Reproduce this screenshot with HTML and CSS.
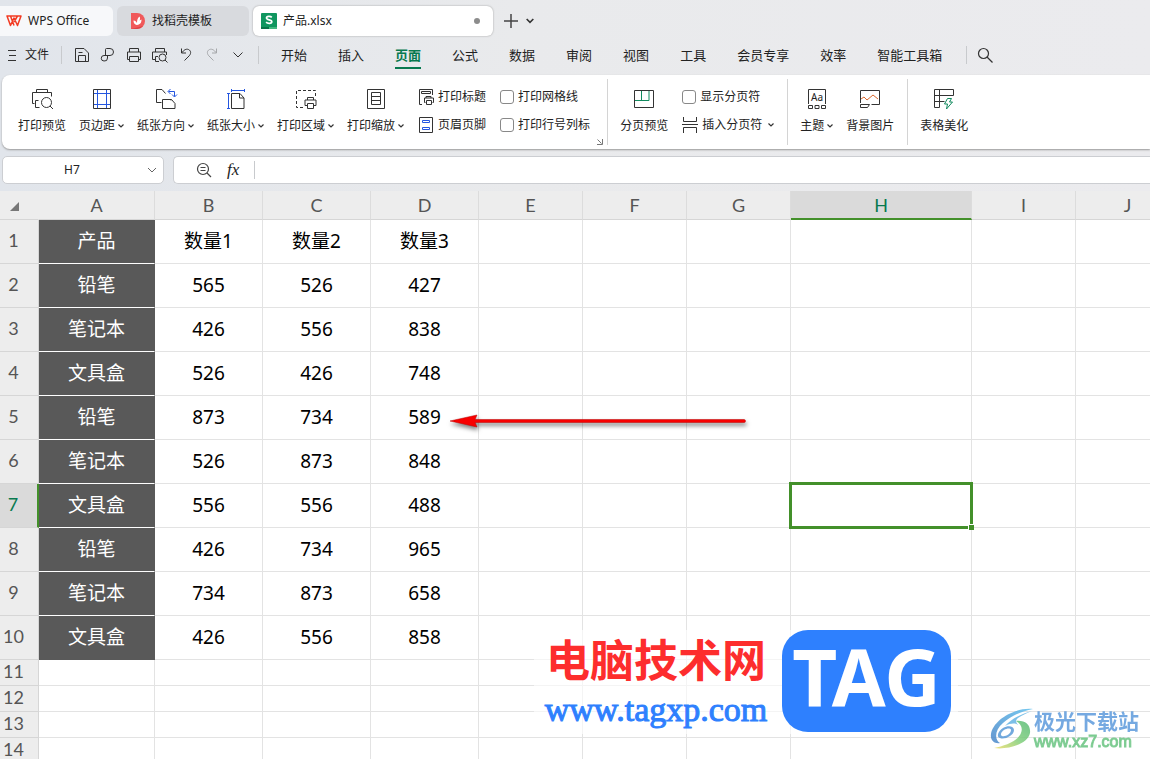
FILE: index.html
```html
<!DOCTYPE html>
<html lang="zh-CN">
<head>
<meta charset="utf-8">
<title>产品.xlsx - WPS Office</title>
<link rel="stylesheet" href="styles.css">
</head>
<body>
<svg class="defs" aria-hidden="true">
  <symbol id="chev" viewBox="0 0 6 6"><path d="M.5 1.500 3 4l2.500-2.500" fill="none" stroke="#333" stroke-width="1.200"/></symbol>
  <symbol id="thin" viewBox="0 0 10 10"><path d="m1 3 4 4 4-4" fill="none" stroke="#666"/></symbol>
</svg>
<div class="app">
  <header class="tabs">
    <button class="tab home">
      <svg width="16" height="12" viewBox="0 0 16 12"><path d="M1 1h14l-3.500 9.500L8 3 4.500 10.500zM4.500 1 8 10.500 M11.500 1 8 7" fill="none" stroke="#f23a22" stroke-width="1.500" stroke-linejoin="round"/></svg>
      <span>WPS Office</span>
    </button>
    <button class="tab templates">
      <svg width="16" height="16" viewBox="0 0 16 16"><path d="M1 0h6a8 8 0 0 1 0 16H1z" fill="#f0595a"/><path d="M1 16 13 13a8 8 0 0 1-6 3z" fill="#dd4146"/><path d="M7 12C4 11.500 3.500 9 3.500 7.500c2 0 2.500 1 3.500 2.500 0-3 .5-5 2.500-6.500 1 2 .5 3 0 4l2-1c0 3-1 5-4.500 5.500z" fill="#fff"/></svg>
      <span>找稻壳模板</span>
    </button>
    <button class="tab file">
      <svg width="16" height="16" viewBox="0 0 16 16"><rect width="16" height="16" rx="1" fill="#10965f"/><path d="M0 14h8v2H0z" fill="#087447"/><path d="M8 14h8v2H8z" fill="#43b77f"/><path d="M10.800 4.300C9.500 3 5.500 3 5.500 5c0 2.400 5.300 1.300 5.300 3.700 0 2.100-4.200 2.100-5.700.5" fill="none" stroke="#fff" stroke-width="1.700"/></svg>
      <span>产品.xlsx</span><i class="dot"></i>
    </button>
    <button class="plain" aria-label="新建"><svg width="14" height="14" viewBox="0 0 14 14"><path d="M7 0v14M0 7h14" stroke="#444" stroke-width="1.500"/></svg></button>
    <button class="plain" aria-label="更多标签"><svg width="8" height="8"><use href="#chev"/></svg></button>
  </header>

  <nav class="menu">
    <button class="filebtn"><svg width="10" height="12" viewBox="0 0 10 12"><path d="M0 1.500h8M1 6.500h7M0 11.500h8" stroke="#333"/></svg><span>文件</span></button>
    <i class="vline"></i>
    <div class="quick">
      <button aria-label="保存"><svg width="16" height="16" viewBox="0 0 16 16"><path d="M1.500 1.500h8.500L14.500 6v8.500h-13zM4.500 14.500v-6h7v6M4.500 5.500h4"/></svg></button>
      <button aria-label="输出"><svg width="16" height="16" viewBox="0 0 16 16"><path d="M5.500 8.500v-6q0-1 1-1H10a3.500 3.500 0 0 1 0 7H4a2.500 2.500 0 0 0 0 5.500q3.500.5 3.500-3v-2.500"/></svg></button>
      <button aria-label="打印"><svg width="16" height="16" viewBox="0 0 16 16"><path d="M3.500 5V1.500h9V5M3.500 12.500h-2v-7.500h13v7.500h-2M3.500 9.500h9v5h-9z"/></svg></button>
      <button aria-label="打印预览"><svg width="16" height="16" viewBox="0 0 16 16"><path d="M3.500 5V1.500h9V5M3.500 12.500h-3v-7.500h14v3M7 14.500H3.500v-5H6"/><circle cx="10.500" cy="10.500" r="3.500"/><path d="m13 13 2.500 2.500"/></svg></button>
      <button aria-label="撤销"><svg width="16" height="16" viewBox="0 0 16 16"><path d="M3.500 1.500v4.500H8M3.500 6C6 3 8 1.500 10.500 2.500c3 1.500 2.500 4.500.5 6.500L6.500 13.500"/></svg></button>
      <button aria-label="恢复" class="off"><svg width="16" height="16" viewBox="0 0 16 16"><path d="M12.500 1.500v4.500H8M12.500 6C10 3 8 1.500 5.500 2.500c-3 1.500-2.500 4.500-.5 6.500l4.500 4.500"/></svg></button>
      <button aria-label="更多"><svg width="16" height="16" viewBox="0 0 16 16"><path d="m3.500 5.500 4.500 4.500 4.500-4.500"/></svg></button>
    </div>
    <i class="vline"></i>
    <div class="menus">
      <button>开始</button><button>插入</button><button class="on">页面</button><button>公式</button><button>数据</button><button>审阅</button><button>视图</button><button>工具</button><button>会员专享</button><button>效率</button><button>智能工具箱</button>
    </div>
    <i class="vline"></i>
    <button class="find" aria-label="搜索"><svg width="16" height="16" viewBox="0 0 16 16" fill="none" stroke="#333" stroke-width="1.200"><circle cx="6.500" cy="6.500" r="5"/><path d="m10 10 5.500 5.500"/></svg></button>
  </nav>

  <section class="ribbon">
    <div class="group page">
      <button class="big"><svg width="24" height="24" viewBox="0 0 24 24"><path d="M6.500 5.500v-3h11v3M4.500 16.500h-2v-11h19v4M9.500 20.500h-4v-7h3"/><circle cx="16.500" cy="15.500" r="5"/><path d="m20 19 3 3"/></svg><span>打印预览</span></button>
      <button class="big"><svg width="24" height="24" viewBox="0 0 24 24"><path d="M7.500 2v19M16.500 2v19M3 6.500h18M3 17.500h18" class="blue"/><path d="M3.500 2.500h17v19h-17z"/></svg><span>页边距<svg width="6" height="6"><use href="#chev"/></svg></span></button>
      <button class="big"><svg width="24" height="24" viewBox="0 0 24 24"><path d="M7.500 15.500h-5v-13h5.500l3.500 4M8.500 21.500v-9h9l3.500 4v5zM17 12.500v1"/><path d="M14.500 4.500h6v5M16.500 2l-2.500 2.500L16.500 7M18 7.500l2.500 2.500L23 7.500" class="blue"/></svg><span>纸张方向<svg width="6" height="6"><use href="#chev"/></svg></span></button>
      <button class="big"><svg width="24" height="24" viewBox="0 0 24 24"><path d="M7.500 6.500h8.500l4 4.500v10.500H7.500zM15.500 6.500v4.500H20"/><path d="M8 3.500h12M7.500 2v3M20.500 2v3M4.500 7v14M3 6.500h3M3 21.500h3" class="blue"/></svg><span>纸张大小<svg width="6" height="6"><use href="#chev"/></svg></span></button>
      <button class="big"><svg width="24" height="24" viewBox="0 0 24 24"><path d="M9 20.500H2.500v-17h19V9" stroke-dasharray="3 2"/><path d="M13.500 13v-2.500h6V13M13 18.500h-2V13h11v5.500h-2M13.500 16.500h6v5h-6z"/></svg><span>打印区域<svg width="6" height="6"><use href="#chev"/></svg></span></button>
      <button class="big"><svg width="24" height="24" viewBox="0 0 24 24"><path d="M3.500 2.500h17v19h-17zM7.500 5.500h9v12h-9zM7.500 9.500h9M7.500 13.500h9"/></svg><span>打印缩放<svg width="6" height="6"><use href="#chev"/></svg></span></button>
      <div class="stack">
        <button class="small"><svg width="16" height="16" viewBox="0 0 16 16"><path d="M4 15.500H1.500v-15h13V6M3.500 2.500h9v2h-9zM8 9V7.500h5V9M7.500 13.500h-1V9h9v4.500h-1M8.500 11.500h5v4h-5z"/></svg><span>打印标题</span></button>
        <button class="small"><svg width="16" height="16" viewBox="0 0 16 16"><path d="M1.500.5h13v15h-13z"/><path d="M4.500 3.500h7v2h-7zM4.500 10.500h7v2h-7z" class="blue"/></svg><span>页眉页脚</span></button>
      </div>
      <div class="stack">
        <label class="small"><input type="checkbox"><span>打印网格线</span></label>
        <label class="small"><input type="checkbox"><span>打印行号列标</span></label>
      </div>
      <button class="corner" aria-label="页面设置"><svg width="6" height="6" viewBox="0 0 6 6"><path d="M.5.500l4 4M5.500 0v5.500H0" stroke="#777" fill="none"/></svg></button>
    </div>
    <div class="group">
      <button class="big"><svg width="24" height="24" viewBox="0 0 24 24"><path d="M2.500 3.500h19v17h-19z"/><path d="M3 13.500h14V4M9.500 4v9" class="green"/></svg><span>分页预览</span></button>
      <div class="stack">
        <label class="small"><input type="checkbox"><span>显示分页符</span></label>
        <button class="small"><svg width="16" height="16" viewBox="0 0 16 16"><path d="M1.500 0v4.500h13V0M0 7.500h16M1.500 16v-5.500h13V16"/></svg><span>插入分页符</span><svg class="drop" width="6" height="6"><use href="#chev"/></svg></button>
      </div>
    </div>
    <div class="group">
      <button class="big"><svg width="24" height="24" viewBox="0 0 24 24"><path d="M3.500 17V2.500h17V17M3.500 18.500h4v3h-4zM10 18.500h4v3h-4zM16.500 18.500h4v3h-4z"/><text x="12" y="14" text-anchor="middle" class="aa">Aa</text></svg><span>主题<svg width="6" height="6"><use href="#chev"/></svg></span></button>
      <button class="big"><svg width="24" height="24" viewBox="0 0 24 24"><path d="M2.500 16V3.500h19v14h-8M2.500 17.500h9l-2 3h-7z"/><path d="m3 12 3-2 3 3 6-5 5 4" class="orange"/></svg><span>背景图片</span></button>
    </div>
    <div class="group">
      <button class="big"><svg width="24" height="24" viewBox="0 0 24 24"><path d="M13 8.500h8.500v-6h-19v18h5V2.500M2.500 8.500H13M2.500 14.500h10"/><path d="m15.500 11.500-3 5.500h3l-1 5 6-7h-3l2-3.500z" class="green"/></svg><span>表格美化</span></button>
    </div>
  </section>

  <section class="formula">
    <div class="namebox"><input aria-label="名称框" value="H7"><button aria-label="展开"><svg width="10" height="10"><use href="#thin"/></svg></button></div>
    <div class="fxbox">
      <button aria-label="缩小"><svg width="16" height="16" viewBox="0 0 16 16" fill="none" stroke="#444" stroke-width="1.200"><circle cx="7" cy="7" r="5.500"/><path d="m11 11 4 4M4.500 5.500h5M4.500 8.500h5"/></svg></button>
      <button class="fx" aria-label="插入函数">fx</button>
      <i class="vline"></i>
      <input aria-label="编辑栏">
    </div>
  </section>

  <main class="sheet">
    <table>
      <colgroup><col class="c0"><col class="ca"><col class="cb"><col class="cb"><col class="cb"><col class="ce"><col class="ce"><col class="ce"><col class="ch"><col class="ce"><col class="ce"></colgroup>
      <thead><tr><th class="all"><svg width="9" height="9" viewBox="0 0 9 9"><path d="M9 0v9H0z" fill="#777"/></svg></th><th>A</th><th>B</th><th>C</th><th>D</th><th>E</th><th>F</th><th>G</th><th class="sel">H</th><th>I</th><th>J</th></tr></thead>
      <tbody>
        <tr><th>1</th><td>产品</td><td>数量1</td><td>数量2</td><td>数量3</td><td></td><td></td><td></td><td></td><td></td><td></td></tr>
        <tr><th>2</th><td>铅笔</td><td>565</td><td>526</td><td>427</td><td></td><td></td><td></td><td></td><td></td><td></td></tr>
        <tr><th>3</th><td>笔记本</td><td>426</td><td>556</td><td>838</td><td></td><td></td><td></td><td></td><td></td><td></td></tr>
        <tr><th>4</th><td>文具盒</td><td>526</td><td>426</td><td>748</td><td></td><td></td><td></td><td></td><td></td><td></td></tr>
        <tr><th>5</th><td>铅笔</td><td>873</td><td>734</td><td>589</td><td></td><td></td><td></td><td></td><td></td><td></td></tr>
        <tr><th>6</th><td>笔记本</td><td>526</td><td>873</td><td>848</td><td></td><td></td><td></td><td></td><td></td><td></td></tr>
        <tr><th class="sel">7</th><td>文具盒</td><td>556</td><td>556</td><td>488</td><td></td><td></td><td></td><td class="active"><i class="handle"></i></td><td></td><td></td></tr>
        <tr><th>8</th><td>铅笔</td><td>426</td><td>734</td><td>965</td><td></td><td></td><td></td><td></td><td></td><td></td></tr>
        <tr><th>9</th><td>笔记本</td><td>734</td><td>873</td><td>658</td><td></td><td></td><td></td><td></td><td></td><td></td></tr>
        <tr><th>10</th><td>文具盒</td><td>426</td><td>556</td><td>858</td><td></td><td></td><td></td><td></td><td></td><td></td></tr>
      </tbody>
      <tbody class="short">
        <tr><th>11</th><td></td><td></td><td></td><td></td><td></td><td></td><td></td><td></td><td></td><td></td></tr>
        <tr><th>12</th><td></td><td></td><td></td><td></td><td></td><td></td><td></td><td></td><td></td><td></td></tr>
        <tr><th>13</th><td></td><td></td><td></td><td></td><td></td><td></td><td></td><td></td><td></td><td></td></tr>
        <tr><th>14</th><td></td><td></td><td></td><td></td><td></td><td></td><td></td><td></td><td></td><td></td></tr>
      </tbody>
    </table>
    <svg class="arrow" width="306" height="30" viewBox="0 0 306 30"><path d="M0 11 27 5l-2 4.500h269a1.500 1.500 0 0 1 0 3H25l2 4.500z" fill="#f80000" stroke="#b00" stroke-width=".5"/></svg>
    <div class="tagmark">
      <div class="tagtext"><span class="red">电脑技术网</span><span class="url">www.tagxp.com</span></div>
      <div class="tagbox">TAG</div>
    </div>
    <div class="xzmark">
      <svg width="44" height="42" viewBox="0 0 44 42">
        <defs>
          <linearGradient id="ga" x1="0" y1="1" x2="1" y2="0"><stop offset="0" stop-color="#4b86c8"/><stop offset="1" stop-color="#5fc0ee"/></linearGradient>
          <linearGradient id="gb" x1="0" y1="1" x2="1" y2="0"><stop offset="0" stop-color="#f3df6a"/><stop offset=".5" stop-color="#7fce7c"/><stop offset="1" stop-color="#58bb77"/></linearGradient>
        </defs>
        <path d="M43 1C25-1 3 12 1 26c-1 7 4 10 9 9C4 31 5 22 13 15 21 8 32 3 43 1z" fill="url(#ga)"/>
        <path d="M42 3C31 6 21 11 15 18c6-3 10-3 13-1-3-4-2-5 0-7 4-3 9-5 14-7z" fill="#65b5e4"/>
        <path d="M26 13c9-1 15 4 14 12C38 36 18 42 4 40c11-2 24-7 27-15 2-5 0-9-5-12z" fill="url(#gb)"/>
        <path d="M13 20c5-3 11-2 11 2 0 6-10 10-14 8-4-1-2-7 3-10zm1 2c-3 2-4 5-2 6 3 1 9-2 9-6 0-2-4-2-7 0z" fill="#5a9bd8"/>
      </svg>
      <div class="xztext"><span class="xzname">极光下载站</span><span class="xzurl">www.xz7.com</span></div>
    </div>
  </main>
</div>
</body>
</html>
```
FILE: styles.css
```css
* { box-sizing: border-box; }
body {
  margin: 0;
  font: 12px/18px "Noto Sans", "Noto Sans CJK SC", sans-serif;
  color: #222;
  background: #ededed;
}
button, input { font: inherit; color: inherit; }
button { border: 0; background: none; padding: 0; white-space: nowrap; }
svg { flex: none; }
.defs { position: absolute; width: 0; height: 0; }
.app {
  height: 100vh;
  display: flex;
  flex-direction: column;
  overflow: hidden;
  background: linear-gradient(90deg, #e1e5eb, #e9eaec 45%, #ebebee);
}
.vline { width: 1px; height: 18px; background: #c8cacd; flex: none; }

.tabs { display: flex; align-items: center; gap: 4px; padding-top: 6px; }
.tab { display: flex; align-items: center; gap: 6px; height: 30px; border-radius: 6px; text-align: left; }
.tab.home { width: 113px; padding-left: 6px; background: #f7f8fa; border-radius: 0 6px 6px 0; }
.tab.templates { width: 132px; padding-left: 13px; background: #d8dade; }
.tab.file { width: 240px; padding: 0 13px 0 8px; background: #fff; box-shadow: 0 0 2px #999; }
.dot { width: 6px; height: 6px; border-radius: 50%; background: #8c8c8c; margin-left: auto; }
.plain { display: flex; padding: 0 4px 0 7px; }
.plain + .plain { padding: 0; }

.menu { display: flex; align-items: center; height: 38px; margin-bottom: 1px; }
.filebtn { display: flex; align-items: center; gap: 7px; padding: 0 12px 0 8px; }
.quick { display: flex; padding: 0 7px; }
.quick button { width: 26px; display: flex; justify-content: center; }
.quick svg { fill: none; stroke: #333; }
.quick .off { opacity: .35; }
.menus { display: flex; gap: 31px; padding: 0 24px 0 22px; font-size: 13px; }
.menus button { line-height: 24px; border-bottom: 2px solid transparent; margin-top: 2px; }
.menus .on { color: #08794f; font-weight: 700; border-color: #08794f; }
.find { display: flex; padding-left: 10px; }

.ribbon {
  display: flex;
  align-items: center;
  height: 74px;
  margin-left: 2px;
  background: #fff;
  border-radius: 8px 0 0 8px;
  box-shadow: 0 1px 2px #999;
}
.group { position: relative; display: flex; align-items: center; gap: 13px; height: 66px; padding: 0 13px 0 12px; border-right: 1px solid #d4d4d4; }
.group.page { padding: 0 17px 0 16px; }
.group:last-child { border: 0; }
.big { display: flex; flex-direction: column; align-items: center; gap: 6px; padding-bottom: 3px; }
.big > span { display: flex; align-items: center; gap: 3px; }
.ribbon button > svg { fill: none; stroke: #333; }
.ribbon .blue { stroke: #2456e0; }
.ribbon .green { stroke: #118a5e; }
.ribbon .orange { stroke: #d9662b; }
.aa { font-size: 10px; fill: #222; stroke: none; }
.stack { display: flex; flex-direction: column; gap: 10px; margin-left: 1px; padding-bottom: 2px; }
.small { display: flex; align-items: center; gap: 4px; }
.small input { appearance: none; width: 14px; height: 14px; margin: 0; border: 1px solid #888; border-radius: 3px; background: #fff; }
.small .drop { margin-left: 2px; }
.corner { position: absolute; right: 4px; bottom: 0; display: flex; }

.formula { display: flex; gap: 9px; padding: 7px 0 7px 2px; }
.namebox, .fxbox { display: flex; align-items: center; height: 28px; background: #fff; border: 1px solid #ccced2; border-radius: 5px; }
.namebox { width: 162px; }
.namebox input { flex: 1; min-width: 0; border: 0; background: none; text-align: center; outline: 0; }
.namebox button { width: 22px; display: flex; justify-content: center; }
.fxbox { flex: 1; border-right: 0; border-radius: 5px 0 0 5px; padding-left: 22px; gap: 15px; }
.fxbox button { display: flex; }
.fxbox .fx { font: italic 17px/20px "Liberation Serif", serif; }
.fxbox input { flex: 1; border: 0; background: none; outline: 0; }

.sheet { position: relative; flex: 1; overflow: hidden; background: #ededed; }
table { table-layout: fixed; width: 1180px; border-spacing: 0; }
.c0 { width: 39px; }
.ca { width: 116px; }
.cb { width: 108px; }
.ce { width: 104px; }
.ch { width: 181px; }
th, td { padding: 0 0 2px; height: 44px; border: solid #e3e3e3; border-width: 0 1px 1px 0; text-align: center; line-height: 22px; }
th { font-family: Lato, sans-serif; font-weight: 400; font-size: 18px; color: #555; background: #ededed; border-color: #d6d6d6; }
thead th { height: 29px; padding: 0; border-right-color: #dcdcdc; }
tbody th { padding: 0 11px 3px 0; }
td { font-size: 19px; background: #fff; color: #000; }
tbody:not(.short) td:nth-child(2) { background: #595959; color: #fff; border-color: #595959; border-bottom-color: #fff; }
tbody:not(.short) tr:last-child td:nth-child(2) { border-bottom-color: #595959; }
.short th, .short td { height: 26px; line-height: 20px; }
th.all { text-align: right; padding-right: 19px; line-height: 10px; border-right-color: #ededed; }
th.sel { background: #dadada; color: #08794f; }
thead th.sel { border-bottom: 2px solid #43902a; }
tbody th.sel { border-right: 2px solid #43902a; }
td.active { position: relative; }
td.active::after { content: ""; position: absolute; inset: -2px; border: 3px solid #43902a; }
.handle { position: absolute; right: -3px; bottom: -3px; z-index: 1; width: 6px; height: 6px; background: #43902a; border: solid #fff; border-width: 1px 0 0 1px; }

.arrow { position: absolute; left: 450px; top: 219px; filter: drop-shadow(1px 3px 2px rgba(0, 0, 0, .5)); }
.tagmark { position: absolute; left: 534px; top: 439px; display: flex; gap: 12px; padding: 0 7px 0 10px; background: rgba(255, 255, 255, .6); }
.tagtext { display: flex; flex-direction: column; align-items: center; width: 226px; padding-right: 2px; white-space: nowrap; }
.red { font: 700 44px/56px "Noto Sans CJK SC", sans-serif; color: #fd2d2d; }
.url { font: 400 34px/48px "Liberation Serif", serif; color: #2e80fe; -webkit-text-stroke: 1px #2e80fe; }
.tagbox { width: 169px; height: 102px; border-radius: 26px; background: #2e80fe; color: #fff; text-align: center; font: 700 78px/92px "Noto Sans", sans-serif; }
.xzmark { position: absolute; left: 990px; top: 517px; display: flex; opacity: .85; }
.xztext { display: flex; flex-direction: column; white-space: nowrap; }
.xzname { font: 700 21px/24px "Noto Sans CJK SC", sans-serif; color: #5e9bdc; }
.xzurl { font: 400 16px/20px "Liberation Sans", sans-serif; color: #4fb96c; -webkit-text-stroke: 1px #6cc583; }
```
